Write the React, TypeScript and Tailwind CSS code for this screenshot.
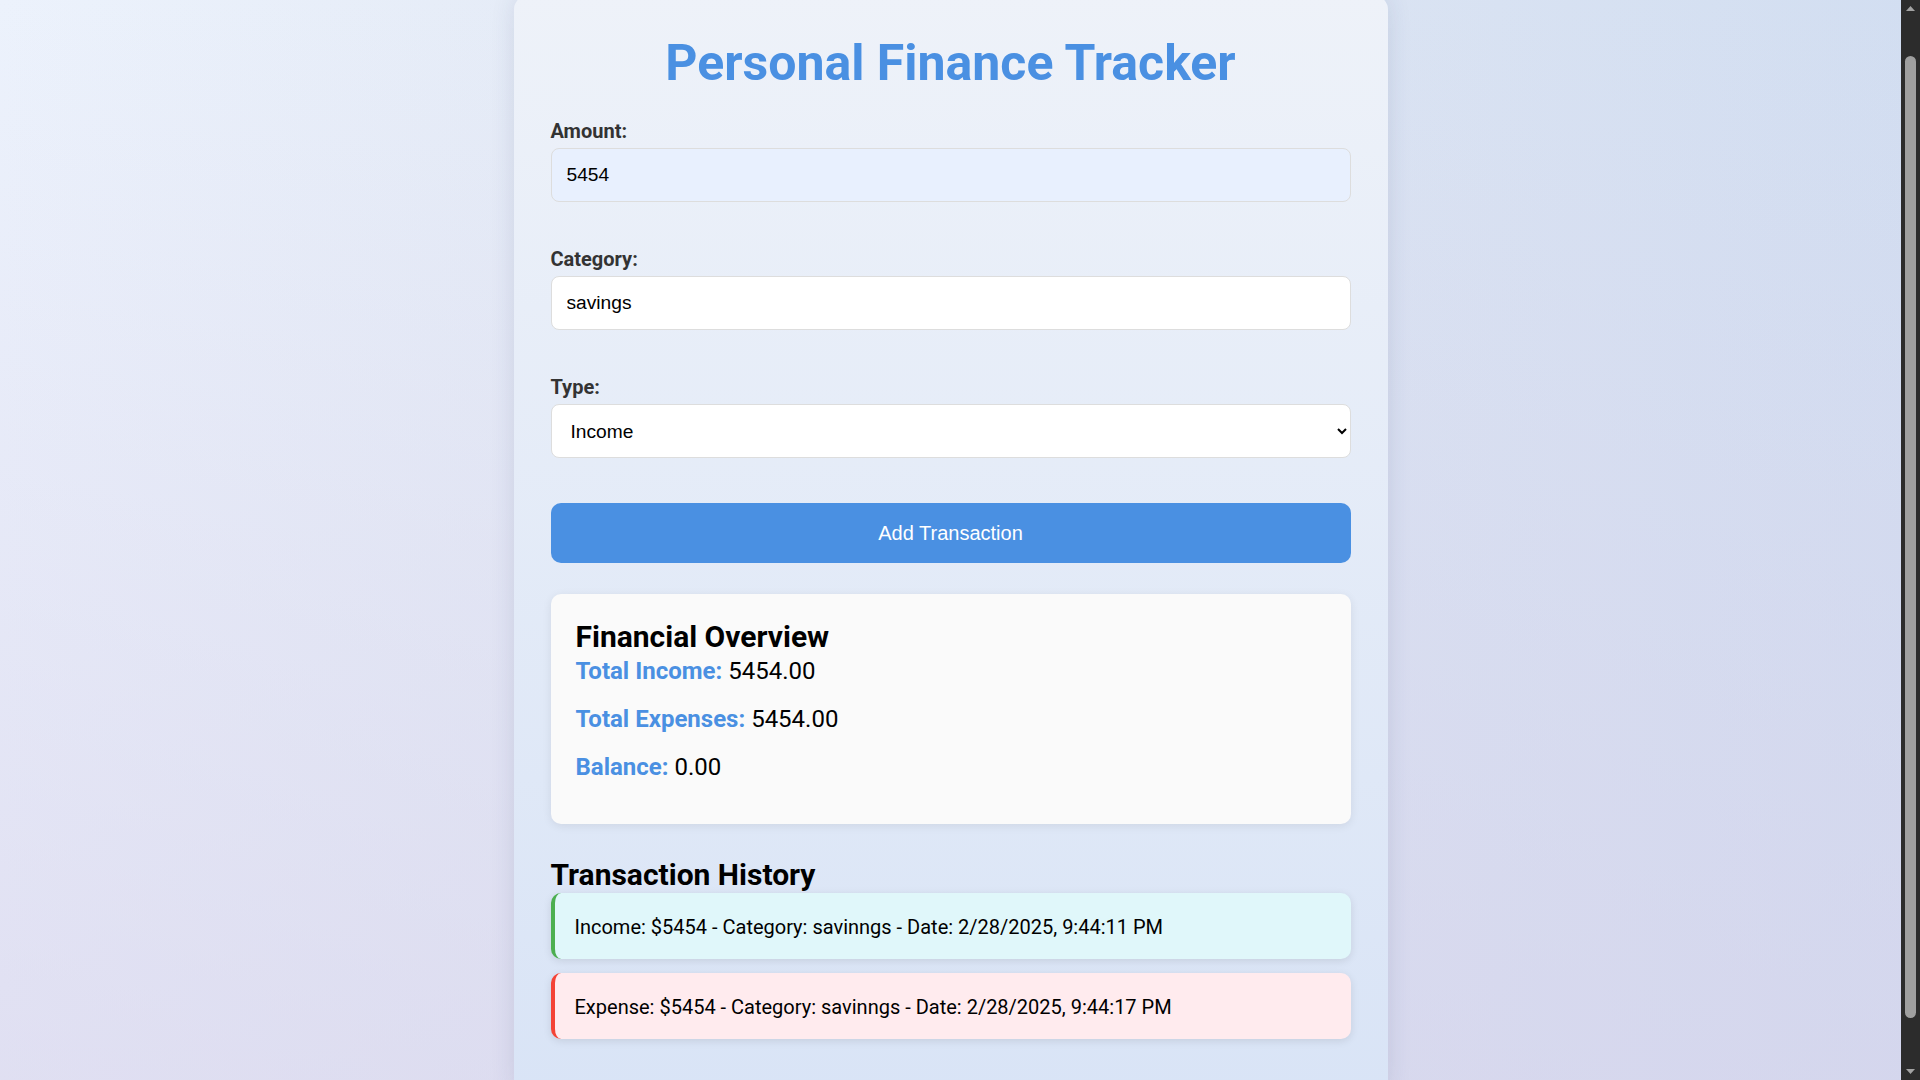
import { useEffect, useRef, type ReactNode } from 'react';

const TRANSACTIONS = [
  { type: 'Income', amount: 5454, category: 'savinngs', date: '2/28/2025, 9:44:11 PM' },
  { type: 'Expense', amount: 5454, category: 'savinngs', date: '2/28/2025, 9:44:17 PM' },
];

function Field({ label, first, children }: { label: string; first?: boolean; children: ReactNode }) {
  return (
    <div className={first ? 'mt-[28px]' : 'mt-[46px]'}>
      <label className="block text-[20px] font-bold leading-[22px] text-[#333]">{label}</label>
      <div className="mt-[6px]">{children}</div>
    </div>
  );
}

function ScrollBar() {
  return (
    <aside className="flex w-[19px] shrink-0 flex-col bg-[#2c2c2c]">
      <div className="flex h-[17px] items-center justify-center">
        <svg width="9" height="5" viewBox="0 0 9 5"><path d="M0 5 L4.5 0 L9 5 Z" fill="#a3a3a3" /></svg>
      </div>
      <div className="flex flex-1 px-[4px] pt-[39px] pb-[45px]">
        <div className="w-full rounded-full bg-[#9f9f9f]" />
      </div>
      <div className="flex h-[17px] items-center justify-center">
        <svg width="9" height="5" viewBox="0 0 9 5"><path d="M0 0 L4.5 5 L9 0 Z" fill="#a3a3a3" /></svg>
      </div>
    </aside>
  );
}

export default function App() {
  const scrollRef = useRef<HTMLDivElement>(null);

  // the reference is taken a little way down the page
  useEffect(() => {
    if (scrollRef.current) scrollRef.current.scrollTop = 45;
  }, []);

  return (
    <div className="flex h-screen bg-[linear-gradient(to_bottom,rgba(236,230,246,0)_0%,rgba(214,208,234,0.55)_100%),linear-gradient(to_right,#ecf2fc_0%,#e1e8f4_45%,#d2def1_100%)]">
      <div ref={scrollRef} className="h-full flex-1 overflow-y-auto [scrollbar-width:none]">
        <div className="py-[40px] font-['Roboto',sans-serif] text-black">
          <div className="mx-auto w-[874px] rounded-[15px] bg-gradient-to-b from-[#eef2f9] to-[#d9e4f6] px-[37px] pt-[39px] pb-[56px] shadow-[0_0_25px_rgba(40,60,110,0.12)]">
            <h1 className="text-center text-[50px] font-bold leading-[58px] text-[#4a90e2]">Personal Finance Tracker</h1>

            {/* Form */}
            <Field label="Amount:" first>
              <input
                type="number"
                defaultValue="5454"
                className="block h-[54px] w-full rounded-[8px] border border-[#ddd] bg-[#e8f0fe] px-[15px] font-['Liberation_Sans',Arial,sans-serif] text-[19.2px] text-black outline-none [appearance:textfield]"
              />
            </Field>
            <Field label="Category:">
              <input
                type="text"
                defaultValue="savings"
                className="block h-[54px] w-full rounded-[8px] border border-[#ddd] bg-white px-[15px] font-['Liberation_Sans',Arial,sans-serif] text-[19.2px] text-black outline-none"
              />
            </Field>
            <Field label="Type:">
              <select
                defaultValue="income"
                className="block h-[54px] w-full rounded-[8px] border border-[#ddd] bg-white px-[15px] font-['Liberation_Sans',Arial,sans-serif] text-[19.2px] text-black outline-none"
              >
                <option value="income">Income</option>
                <option value="expense">Expense</option>
              </select>
            </Field>

            <button className="mt-[45px] block h-[60px] w-full rounded-[10px] bg-[#4a90e2] font-['Liberation_Sans',Arial,sans-serif] text-[20px] text-white">
              Add Transaction
            </button>

            {/* Overview */}
            <div className="mt-[31px] rounded-[10px] bg-[#fafafa] px-[25px] pt-[26px] pb-[44px] shadow-[0_2px_10px_rgba(0,0,0,0.08)]">
              <h2 className="text-[30px] font-bold leading-[34px]">Financial Overview</h2>
              <p className="mt-[4px] text-[24px] leading-[26px]">
                <span className="font-bold text-[#4a90e2]">Total Income:</span> 5454.00
              </p>
              <p className="mt-[22px] text-[24px] leading-[26px]">
                <span className="font-bold text-[#4a90e2]">Total Expenses:</span> 5454.00
              </p>
              <p className="mt-[22px] text-[24px] leading-[26px]">
                <span className="font-bold text-[#4a90e2]">Balance:</span> 0.00
              </p>
            </div>

            {/* History */}
            <h2 className="mt-[34px] text-[30px] font-bold leading-[34px]">Transaction History</h2>
            <ul className="mt-[1px] flex flex-col gap-[14px]">
              {TRANSACTIONS.map(t => (
                <li
                  key={t.date}
                  className={
                    t.type === 'Income'
                      ? 'rounded-[10px] border-l-4 border-[#4caf50] bg-[#e0f7fa] pt-[21px] pb-[19px] pl-[20px] text-[20px] leading-[26px] shadow-[0_2px_8px_rgba(0,0,0,0.1)]'
                      : 'rounded-[10px] border-l-4 border-[#f44336] bg-[#ffebee] pt-[21px] pb-[19px] pl-[20px] text-[20px] leading-[26px] shadow-[0_2px_8px_rgba(0,0,0,0.1)]'
                  }
                >
                  {t.type}: ${t.amount} - Category: {t.category} - Date: {t.date}
                </li>
              ))}
            </ul>
          </div>
        </div>
      </div>
      <ScrollBar />
    </div>
  );
}
